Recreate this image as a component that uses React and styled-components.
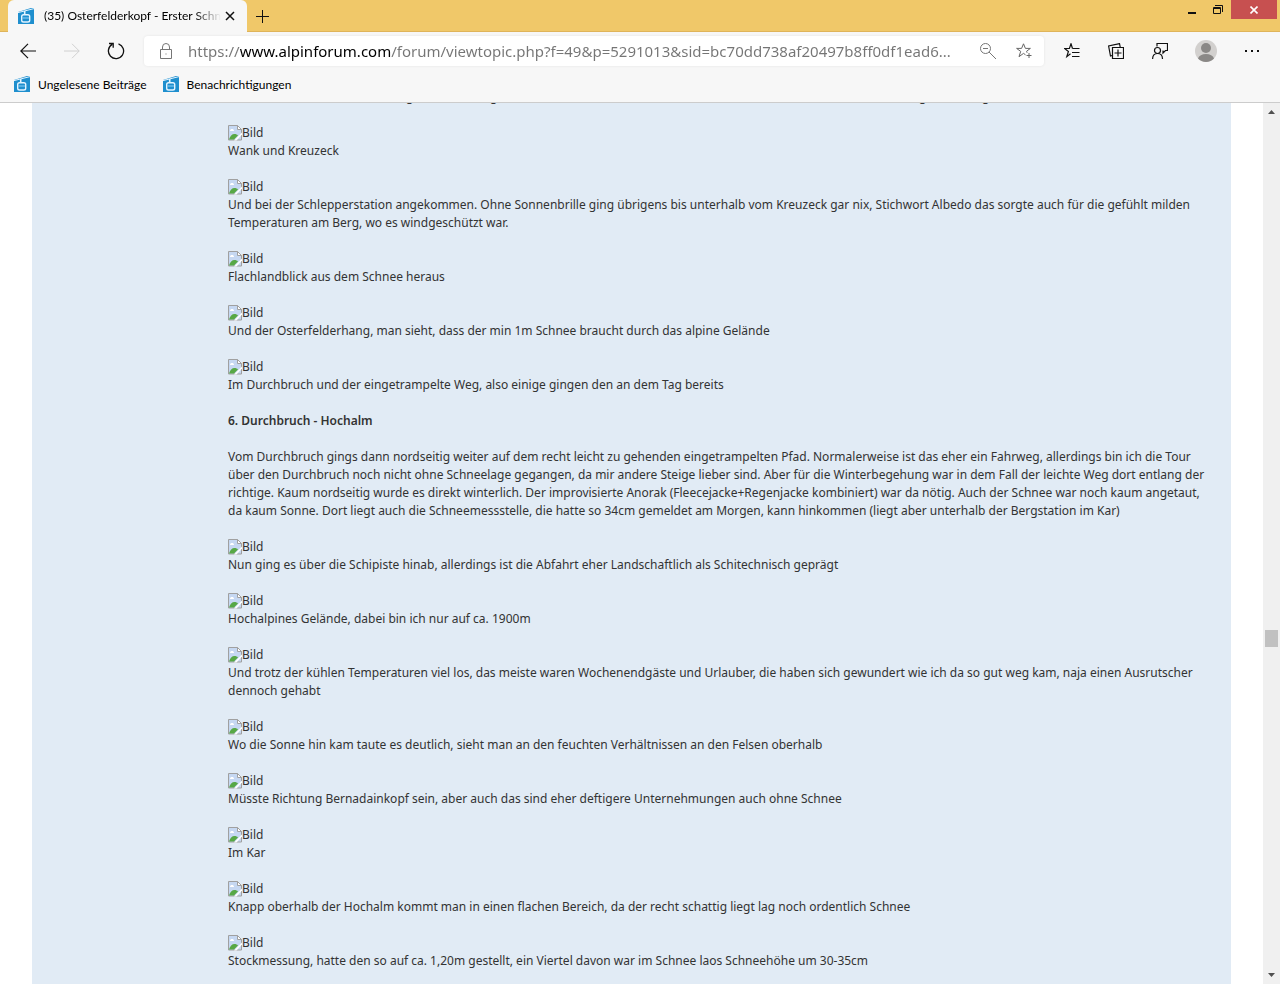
import styled, { createGlobalStyle } from "styled-components";

const GlobalStyle = createGlobalStyle`
  * {
    box-sizing: border-box;
  }

  body {
    margin: 0;
    background: #ffffff;
    font-family: "Noto Sans", "Open Sans", sans-serif;
    color: #000000;
  }
`;

const Browser = styled.div`
  display: flex;
  flex-direction: column;
  height: 100vh;
  overflow: hidden;
`;

const TitleBar = styled.header`
  display: flex;
  align-items: flex-end;
  height: 32px;
  flex: none;
  padding-left: 8px;
  background: #f0c869;
  box-shadow: inset 0 -1px 0 #dfb45a;
`;

const Tab = styled.div`
  display: flex;
  align-items: center;
  width: 239px;
  height: 32px;
  padding: 0 8px 0 10px;
  border-radius: 6px 6px 0 0;
  background: #f7f7f7;
`;

const TabTitle = styled.span`
  flex: 1;
  min-width: 0;
  margin-left: 10px;
  overflow: hidden;
  white-space: nowrap;
  font-family: Lato, sans-serif;
  font-size: 12px;
  line-height: 16px;
  mask-image: linear-gradient(to right, #000 85%, transparent);
`;

const IconBtn = styled.button`
  display: flex;
  justify-content: center;
  align-items: center;
  flex: none;
  width: ${({ $width }) => $width || 44}px;
  height: ${({ $height }) => $height || 32}px;
  padding: 0;
  border: 0;
  background: ${({ $bg }) => $bg || "transparent"};
  color: ${({ $color }) => $color || "#111111"};

  svg {
    display: block;
  }
`;

const WindowBtns = styled.div`
  display: flex;
  align-self: flex-start;
  margin-left: auto;
  padding-right: 3px;
`;

const Toolbar = styled.nav`
  display: flex;
  align-items: center;
  flex: none;
  height: 38px;
  padding: 0 6px;
  background: #f7f7f7;
`;

const AddressBar = styled.div`
  display: flex;
  align-items: center;
  flex: 1;
  min-width: 0;
  height: 30px;
  margin: 0 6px;
  padding-right: 2px;
  border-radius: 4px;
  background: #ffffff;
  box-shadow: 0 0 3px rgba(0, 0, 0, 0.08);
`;

/* the host part of the address is darker than the rest */
const AddressInput = styled.input`
  flex: 1;
  min-width: 0;
  height: 26px;
  padding: 0;
  border: 0;
  outline: 0;
  font-family: inherit;
  font-size: 15px;
  line-height: 26px;
  background: linear-gradient(
    to right,
    #757575 52px,
    #000000 52px,
    #000000 203px,
    #757575 203px
  );
  -webkit-background-clip: text;
  background-clip: text;
  color: transparent;
`;

const Favorites = styled.nav`
  display: flex;
  gap: 16px;
  flex: none;
  height: 33px;
  padding: 6px 14px 0;
  border-bottom: 1px solid #cccccc;
  background: #f7f7f7;
`;

const Favorite = styled.a`
  display: flex;
  align-items: center;
  gap: 8px;
  height: 16px;
  font-family: Lato, sans-serif;
  font-size: 12px;
  color: #000000;
  text-decoration: none;
`;

const Viewport = styled.div`
  display: flex;
  flex: 1;
  min-height: 0;
`;

const Page = styled.main`
  flex: 1;
  min-width: 0;
  padding: 0 32px;
  overflow: hidden;
`;

const Post = styled.article`
  min-height: 100%;
  padding: 0 16px 0 196px;
  background: #e1ebf5;
  font-size: 12px;
  line-height: 18px;
  color: #333333;
`;

const CutLine = styled.div`
  display: flex;
  align-items: flex-end;
  height: 3px;
  margin-bottom: 18px;
  padding-left: 178px;
  overflow: hidden;
`;

const CutLetter = styled.span`
  flex: none;
  width: ${({ $width }) => $width}px;
`;

const Entry = styled.p`
  margin: 0 0 18px;
`;

const Line = styled.span`
  display: block;
  white-space: nowrap;
`;

const Picture = styled.span`
  display: flex;
  align-items: center;
  height: 18px;
`;

const Heading = styled.h3`
  margin: 0 0 18px;
  font-size: inherit;
  font-weight: 600;
  line-height: inherit;
`;

const Scrollbar = styled.div`
  display: flex;
  flex-direction: column;
  align-items: center;
  flex: none;
  width: 17px;
  background: #f0f0f0;
`;

const Track = styled.div`
  display: flex;
  flex-direction: column;
  align-items: center;
  flex: 1;
  width: 100%;
`;

const Before = styled.div`
  flex: 510;
`;

const Thumb = styled.div`
  width: 13px;
  height: 17px;
  background: #c1c1c1;
`;

const After = styled.div`
  flex: 320;
`;

const Icon = ({ children, size = 16, width = 1 }) => (
  <svg
    width={size}
    height={size}
    viewBox={`0 0 ${size} ${size}`}
    fill="none"
    stroke="currentColor"
    strokeWidth={width}
    aria-hidden="true"
  >
    {children}
  </svg>
);

const SiteIcon = () => (
  <svg width="16" height="16" viewBox="0 0 16 16" aria-hidden="true">
    <path d="M0 0h16v16H0z" fill="#1f8fce" />
    <path d="M0 0h13L0 4z" fill="#f7f7f7" />
    <path d="M0 4.600 16 .6" stroke="#e4f4ff" strokeWidth="1" />
    <path d="M6.700 3v4.500" stroke="#e4f4ff" strokeWidth="1.6" />
    <rect x="3.7" y="6.700" width="8" height="7.300" rx="1.8" fill="#1f8fce" stroke="#e4f4ff" strokeWidth="1.4" />
    <path d="M4.500 10h6.500" stroke="#8ed0f5" />
  </svg>
);

const BrokenImage = () => (
  <svg width="14" height="16" viewBox="0 0 14 16" aria-hidden="true">
    <path d="M.5 .5h9l4 4v10.500h-13z" fill="#c6d8f2" stroke="#a0a0a0" />
    <path d="M9.500 .5v4h4z" fill="#ffffff" stroke="#a0a0a0" />
    <path d="M2 6c0-1.500 1-2 2-2s2 .5 2 2z" fill="#ffffff" />
    <path d="M1 14.500c1-3.500 3-5.500 5.500-5.500 1.500 0 2.500.5 3.500 1.500l-4 4z" fill="#57a845" />
    <path d="M6 15.500 14 7.500v2L8.500 15.500z" fill="#ffffff" />
  </svg>
);

const entries = [
  ["Wank und Kreuzeck"],
  [
    "Und bei der Schlepperstation angekommen. Ohne Sonnenbrille ging übrigens bis unterhalb vom Kreuzeck gar nix, Stichwort Albedo das sorgte auch für die gefühlt milden",
    "Temperaturen am Berg, wo es windgeschützt war.",
  ],
  ["Flachlandblick aus dem Schnee heraus"],
  ["Und der Osterfelderhang, man sieht, dass der min 1m Schnee braucht durch das alpine Gelände"],
  ["Im Durchbruch und der eingetrampelte Weg, also einige gingen den an dem Tag bereits"],
];

const story = [
  "Vom Durchbruch gings dann nordseitig weiter auf dem recht leicht zu gehenden eingetrampelten Pfad. Normalerweise ist das eher ein Fahrweg, allerdings bin ich die Tour",
  "über den Durchbruch noch nicht ohne Schneelage gegangen, da mir andere Steige lieber sind. Aber für die Winterbegehung war in dem Fall der leichte Weg dort entlang der",
  "richtige. Kaum nordseitig wurde es direkt winterlich. Der improvisierte Anorak (Fleecejacke+Regenjacke kombiniert) war da nötig. Auch der Schnee war noch kaum angetaut,",
  "da kaum Sonne. Dort liegt auch die Schneemessstelle, die hatte so 34cm gemeldet am Morgen, kann hinkommen (liegt aber unterhalb der Bergstation im Kar)",
];

const descent = [
  ["Nun ging es über die Schipiste hinab, allerdings ist die Abfahrt eher Landschaftlich als Schitechnisch geprägt"],
  ["Hochalpines Gelände, dabei bin ich nur auf ca. 1900m"],
  [
    "Und trotz der kühlen Temperaturen viel los, das meiste waren Wochenendgäste und Urlauber, die haben sich gewundert wie ich da so gut weg kam, naja einen Ausrutscher",
    "dennoch gehabt",
  ],
  ["Wo die Sonne hin kam taute es deutlich, sieht man an den feuchten Verhältnissen an den Felsen oberhalb"],
  ["Müsste Richtung Bernadainkopf sein, aber auch das sind eher deftigere Unternehmungen auch ohne Schnee"],
  ["Im Kar"],
  ["Knapp oberhalb der Hochalm kommt man in einen flachen Bereich, da der recht schattig liegt lag noch ordentlich Schnee"],
  ["Stockmessung, hatte den so auf ca. 1,20m gestellt, ein Viertel davon war im Schnee laos Schneehöhe um 30-35cm"],
];

function PictureEntry({ lines }) {
  return (
    <Entry>
      <Picture>
        <BrokenImage />
        Bild
      </Picture>
      {lines.map((line) => (
        <Line key={line}>{line}</Line>
      ))}
    </Entry>
  );
}

function App() {
  return (
    <Browser>
      <GlobalStyle />
      <TitleBar>
        <Tab>
          <SiteIcon />
          <TabTitle>(35) Osterfelderkopf - Erster Schnee</TabTitle>
          <IconBtn $width={18} aria-label="Tab schließen">
            <Icon size={10} width={1.5}>
              <path d="M1 1l8 8M9 1 1 9" />
            </Icon>
          </IconBtn>
        </Tab>
        <IconBtn $width={31} aria-label="Neuer Tab">
          <Icon size={13}>
            <path d="M6.500 0v13M0 6.500h13" />
          </Icon>
        </IconBtn>
        <WindowBtns>
          <IconBtn $width={26} $height={19} aria-label="Minimieren">
            <Icon size={12}>
              <path d="M2 9h8" strokeWidth="2" />
            </Icon>
          </IconBtn>
          <IconBtn $width={26} $height={19} aria-label="Verkleinern">
            <Icon size={12}>
              <path d="M1.500 3.500h7v6h-7zM1 4.500h8M3 1.500h7.500V8" />
            </Icon>
          </IconBtn>
          <IconBtn $width={46} $height={19} $bg="#c75050" $color="#ffffff" aria-label="Schließen">
            <Icon size={8} width={1.6}>
              <path d="M.5 .5l7 7M7.500 .5l-7 7" />
            </Icon>
          </IconBtn>
        </WindowBtns>
      </TitleBar>

      <Toolbar>
        <IconBtn aria-label="Zurück">
          <Icon width={1.2}>
            <path d="M16 8H.8M8 .8.8 8 8 15.200" />
          </Icon>
        </IconBtn>
        <IconBtn $color="#d0d0d0" aria-label="Vorwärts">
          <Icon>
            <path d="M0 8h15.200M8 .8 15.200 8 8 15.200" />
          </Icon>
        </IconBtn>
        <IconBtn aria-label="Aktualisieren">
          <Icon size={18} width={1.3}>
            <path d="M11.500 1.800A7.600 7.600 0 1 1 5.200 2.400M2 1.500h4.200v4.300" />
          </Icon>
        </IconBtn>
        <AddressBar>
          <IconBtn $color="#767676" aria-label="Websiteinformationen">
            <Icon size={18}>
              <path d="M3.500 7.500h11v9h-11zM5.500 7.500V5a3.500 3.500 0 0 1 7 0v2.500" />
              <path d="M8.500 11.500h1v1h-1z" fill="currentColor" stroke="none" />
            </Icon>
          </IconBtn>
          <AddressInput
            aria-label="Adresse"
            defaultValue="https://www.alpinforum.com/forum/viewtopic.php?f=49&p=5291013&sid=bc70dd738af20497b8ff0df1ead6..."
          />
          <IconBtn $width={36} $color="#767676" aria-label="Zoom">
            <Icon>
              <circle cx="5.500" cy="5.500" r="5" />
              <path d="M9 9l7 7M3 5.500h5" />
            </Icon>
          </IconBtn>
          <IconBtn $width={36} $color="#666666" aria-label="Favorit hinzufügen">
            <Icon>
              <path d="M9.500 11.800 7.500 10.400 3 13.700l1.700-5.300L.6 5.400h5L7.500.8l1.900 4.600h5l-3.800 2.800.5 1.600M13 10v5M10.500 12.500h5" />
            </Icon>
          </IconBtn>
        </AddressBar>
        <IconBtn aria-label="Favoriten">
          <Icon width={1.200}>
            <path d="M6.500 10.800 2.800 13.700l1.600-5.200L.6 5.500h4.800L7 .8l1.500 4.700M8.500 5.500h7M8 9.500h7.500M8 13.500h7.500" />
          </Icon>
        </IconBtn>
        <IconBtn aria-label="Sammlungen">
          <Icon width={1.200}>
            <path d="M4.500 4.500h11v11h-11zM10 6.500v7M6.500 10h7M4 12.500l-1.500.5L.6 3 11.500.6l.7 3.400" />
          </Icon>
        </IconBtn>
        <IconBtn aria-label="Feedback senden">
          <Icon width={1.200}>
            <circle cx="5.500" cy="7.500" r="3" />
            <path d="M.6 16c0-3.500 2-5.500 5-5.500s4.900 2 4.900 5.500M5 3.500v-3h10.500v7h-2l-2.500 2.500V7.500" />
          </Icon>
        </IconBtn>
        <IconBtn $width={48} aria-label="Profil">
          <svg width="22" height="22" viewBox="0 0 22 22" aria-hidden="true">
            <circle cx="11" cy="11" r="11" fill="#d2d0ce" />
            <circle cx="11" cy="8" r="5" fill="#8a8886" />
            <path d="M3 18.500c1-3 4-4.500 8-4.500s7 1.500 8 4.500a11 11 0 0 1-16 0z" fill="#8a8886" />
          </svg>
        </IconBtn>
        <IconBtn aria-label="Einstellungen und mehr">
          <Icon>
            <path d="M1 8h2M7 8h2M13 8h2" strokeWidth="2" />
          </Icon>
        </IconBtn>
      </Toolbar>

      <Favorites>
        <Favorite href="#ungelesen">
          <SiteIcon />
          Ungelesene Beiträge
        </Favorite>
        <Favorite href="#benachrichtigungen">
          <SiteIcon />
          Benachrichtigungen
        </Favorite>
      </Favorites>

      <Viewport>
        <Page>
          <Post>
            <CutLine aria-hidden="true">
              <CutLetter $width={84}>g</CutLetter>
              <CutLetter $width={429}>g</CutLetter>
              <CutLetter $width={63}>g</CutLetter>
              <CutLetter $width={8}>g</CutLetter>
            </CutLine>
            {entries.map((lines) => (
              <PictureEntry key={lines[0]} lines={lines} />
            ))}
            <Heading>6. Durchbruch - Hochalm</Heading>
            <Entry>
              {story.map((line) => (
                <Line key={line}>{line}</Line>
              ))}
            </Entry>
            {descent.map((lines) => (
              <PictureEntry key={lines[0]} lines={lines} />
            ))}
          </Post>
        </Page>
        <Scrollbar>
          <IconBtn $width={17} $height={17} $color="#505050" aria-label="Nach oben">
            <Icon size={7}>
              <path d="M0 6 3.500 2 7 6z" fill="currentColor" stroke="none" />
            </Icon>
          </IconBtn>
          <Track>
            <Before />
            <Thumb />
            <After />
          </Track>
          <IconBtn $width={17} $height={17} $color="#505050" aria-label="Nach unten">
            <Icon size={7}>
              <path d="M0 1 3.500 5 7 1z" fill="currentColor" stroke="none" />
            </Icon>
          </IconBtn>
        </Scrollbar>
      </Viewport>
    </Browser>
  );
}

export default App;
